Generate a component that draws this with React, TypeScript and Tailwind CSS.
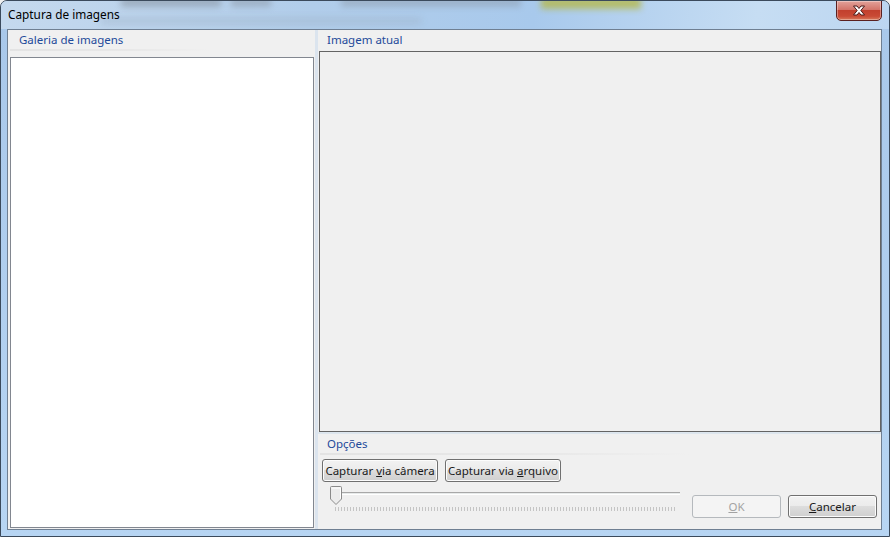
import React from "react";

const font = { fontFamily: '"Segoe UI", "Noto Sans", "Liberation Sans", sans-serif' };

function Btn({ children, disabled, className = "" }: { children: React.ReactNode; disabled?: boolean; className?: string }) {
  return (
    <div
      className={
        "flex items-center justify-center h-[23px] rounded-[3px] border text-[11.5px] whitespace-nowrap " +
        (disabled
          ? "border-[#b5b9bd] bg-[#f4f4f4] text-[#a3a3a3] "
          : "border-[#707070] bg-[linear-gradient(#f2f2f2_0%,#ebebeb_49%,#dddddd_50%,#cfcfcf_100%)] text-[#1a1a1a] shadow-[inset_0_0_0_1px_#fcfcfc] ") +
        className
      }
    >
      {children}
    </div>
  );
}

function Header({ text, lineW }: { text: string; lineW: string }) {
  return (
    <div className="relative h-full">
      <div className="pl-[11px] pt-[2px] text-[11.5px] text-[#1e4a9a] leading-[16px]">{text}</div>
      <div className={"absolute left-[2px] bottom-[6px] h-[2px] bg-[linear-gradient(to_right,#e3e3e3,#e8e8e8_60%,rgba(240,240,240,0))] " + lineW} />
    </div>
  );
}

export default function App() {
  const ticks = Array.from({ length: 114 });
  return (
    <div className="w-[890px] h-[537px] relative overflow-hidden bg-[#f0f0f0]" style={font}>
      <div className="absolute inset-0 rounded-t-[7px] border border-[#3b4a5c] bg-[linear-gradient(to_bottom,#b7d1ec,#a9c8ea_30px,#b7d5f3)] flex flex-col">
        {/* title bar */}
        <div className="relative h-[28px] shrink-0 overflow-hidden rounded-t-[6px]">
          <div className="absolute inset-0 bg-[linear-gradient(100deg,#c5d9ee_0%,#b1cdea_35%,#a8c9ec_60%,#c6ddf3_85%,#bcd6f1_100%)]" />
          <div className="absolute left-[120px] top-[-4px] w-[100px] h-[10px] bg-[#8a96a4] opacity-60 blur-[3px]" />
          <div className="absolute left-[230px] top-[-4px] w-[40px] h-[10px] bg-[#8a96a4] opacity-50 blur-[3px]" />
          <div className="absolute left-[340px] top-[-4px] w-[180px] h-[10px] bg-[#8a96a4] opacity-45 blur-[3px]" />
          <div className="absolute left-[540px] top-[-4px] w-[100px] h-[12px] bg-[#b5b84a] opacity-80 blur-[3px]" />
          <div className="absolute left-[100px] top-[16px] w-[320px] h-[8px] bg-[#9fb3c8] opacity-40 blur-[3px]" />
          <div className="relative pl-[7px] pt-[5px] text-[11.8px] text-black leading-[16px]">Captura de imagens</div>
          <div className="absolute right-[7px] top-[-1px] w-[46px] h-[21px] rounded-b-[5px] border border-[#5a2020] bg-[linear-gradient(#e2a29a_0%,#d3756a_45%,#c2402e_50%,#c94a35_80%,#d87a5c_100%)] shadow-[inset_0_0_0_1px_rgba(255,255,255,0.35)] flex items-center justify-center">
            <svg width="14" height="11" viewBox="0 0 14 11">
              <path d="M1.5 1 L5 1 L7 3.5 L9 1 L12.5 1 L8.8 5.5 L12.5 10 L9 10 L7 7.5 L5 10 L1.5 10 L5.2 5.5 Z" fill="#ffffff" stroke="#4a1a18" strokeWidth="1" />
            </svg>
          </div>
        </div>
        {/* middle */}
        <div className="flex flex-1 min-h-0 pl-[6px] pr-[7px] pb-[6px]">
          <div className="flex flex-1 border border-[#6f7f92] bg-[#f0f0f0]">
            {/* left panel */}
            <div className="w-[306px] flex flex-col shrink-0">
              <div className="h-[27px] shrink-0">
                <Header text="Galeria de imagens" lineW="w-[200px]" />
              </div>
              <div className="flex-1 ml-[2px] mr-0 mb-[1px] border border-[#828790] bg-white" />
            </div>
            {/* splitter */}
            <div className="w-[3px] shrink-0 ml-[1px] bg-[#dbe4ee]" />
            {/* right panel */}
            <div className="flex-1 flex flex-col">
              <div className="h-[21px] shrink-0">
                <div className="pl-[9px] pt-[2px] text-[11.5px] text-[#1e4a9a] leading-[16px]">Imagem atual</div>
              </div>
              <div className="h-[381px] shrink-0 ml-[1px] mr-0 border border-[#646464] bg-[#f0f0f0]" />
              <div className="h-[24px] shrink-0 relative">
                <div className="absolute left-0 right-0 top-0 h-[2px] bg-[#dde6ee]" />
                <div className="pl-[9px] pt-[4px] text-[11.5px] text-[#1e4a9a] leading-[16px]">Opções</div>
                <div className="absolute left-[2px] top-[21px] w-[370px] h-[2px] bg-[linear-gradient(to_right,#e3e3e3,#e8e8e8_60%,rgba(240,240,240,0))]" />
              </div>
              <div className="flex gap-[7px] pl-[4px] pt-[3px]">
                <Btn className="w-[116px]">
                  <span>Capturar <span className="underline">v</span>ia câmera</span>
                </Btn>
                <Btn className="w-[116px]">
                  <span>Capturar via <span className="underline">a</span>rquivo</span>
                </Btn>
              </div>
              <div className="flex items-start pl-[12px] pr-[4px] mt-[4px]">
                <div className="w-[350px] relative h-[28px]">
                  <div className="absolute left-0 right-0 top-[6px] h-[3px] border-t border-[#a8a8a8] bg-[#e7eaea] border-b border-b-white" />
                  <svg className="absolute left-0 top-0" width="12" height="19" viewBox="0 0 12 19">
                    <path d="M0.5 1.5 Q0.5 0.5 1.5 0.5 L10.5 0.5 Q11.5 0.5 11.5 1.5 L11.5 13 L6 18.5 L0.5 13 Z" fill="#ececec" stroke="#8a8a8a" />
                    <path d="M1.5 2 L10.5 2 L10.5 12.5" fill="none" stroke="#ffffff" />
                  </svg>
                  <div className="absolute left-[5px] top-[21px] flex gap-[2px]">
                    {ticks.map((_, i) => (
                      <div key={i} className="w-px h-[4px] bg-[#c4c4c4]" />
                    ))}
                  </div>
                </div>
                <div className="flex-1" />
                <div className="flex gap-[7px] pt-[9px]">
                  <Btn disabled className="w-[89px]">
                    <span><span className="underline">O</span>K</span>
                  </Btn>
                  <Btn className="w-[89px]">
                    <span><span className="underline">C</span>ancelar</span>
                  </Btn>
                </div>
              </div>
            </div>
          </div>
        </div>
      </div>
    </div>
  );
}
